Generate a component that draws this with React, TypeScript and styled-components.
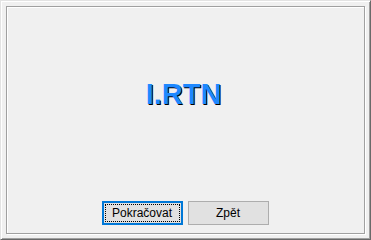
import React from "react";
import styled, { createGlobalStyle } from "styled-components";

const Global = createGlobalStyle`
  html, body { margin: 0; padding: 0; background: #f0f0f0; }
  * { box-sizing: border-box; }
`;

const Window = styled.div`
  width: 371px;
  height: 240px;
  display: flex;
  padding: 5px;
  background: #f0f0f0;
  border-top: 1px solid #e3e3e3;
  border-left: 1px solid #e3e3e3;
  border-right: 1px solid #696969;
  border-bottom: 1px solid #696969;
  box-shadow: inset 1px 1px #ffffff, inset -1px -1px #a0a0a0;
`;

const Frame = styled.div`
  flex: 1;
  display: flex;
  flex-direction: column;
  align-items: center;
  border: 1px solid #a0a0a0;
  box-shadow: inset 1px 1px #ffffff, 1px 1px #ffffff;
  padding-bottom: 8px;
`;

const Title = styled.div`
  margin-top: 73px;
  padding-right: 4px;
  font-family: "Liberation Sans", Arial, sans-serif;
  font-weight: bold;
  font-size: 29px;
  line-height: 29px;
  color: #1e88ff;
  text-shadow: 1px 1px 0 #000000;
`;

const ButtonRow = styled.div`
  margin-top: auto;
  display: flex;
  gap: 5px;
  padding-right: 1px;
`;

const Button = styled.button<{ $focused?: boolean }>`
  position: relative;
  width: 81px;
  height: 24px;
  margin: 0;
  padding: 0;
  background: #e1e1e1;
  border: ${(p) => (p.$focused ? "2px solid #0078d7" : "1px solid #adadad")};
  font-family: "Liberation Sans", Arial, sans-serif;
  font-size: 12px;
  color: #000000;
  display: flex;
  align-items: center;
  justify-content: center;
  &::after {
    content: "";
    display: ${(p) => (p.$focused ? "block" : "none")};
    position: absolute;
    inset: 1px;
    border: 1px dotted #000000;
  }
`;

export default function App() {
  return (
    <>
      <Global />
      <Window>
        <Frame>
          <Title>I.RTN</Title>
          <ButtonRow>
            <Button $focused>Pokračovat</Button>
            <Button>Zpět</Button>
          </ButtonRow>
        </Frame>
      </Window>
    </>
  );
}
